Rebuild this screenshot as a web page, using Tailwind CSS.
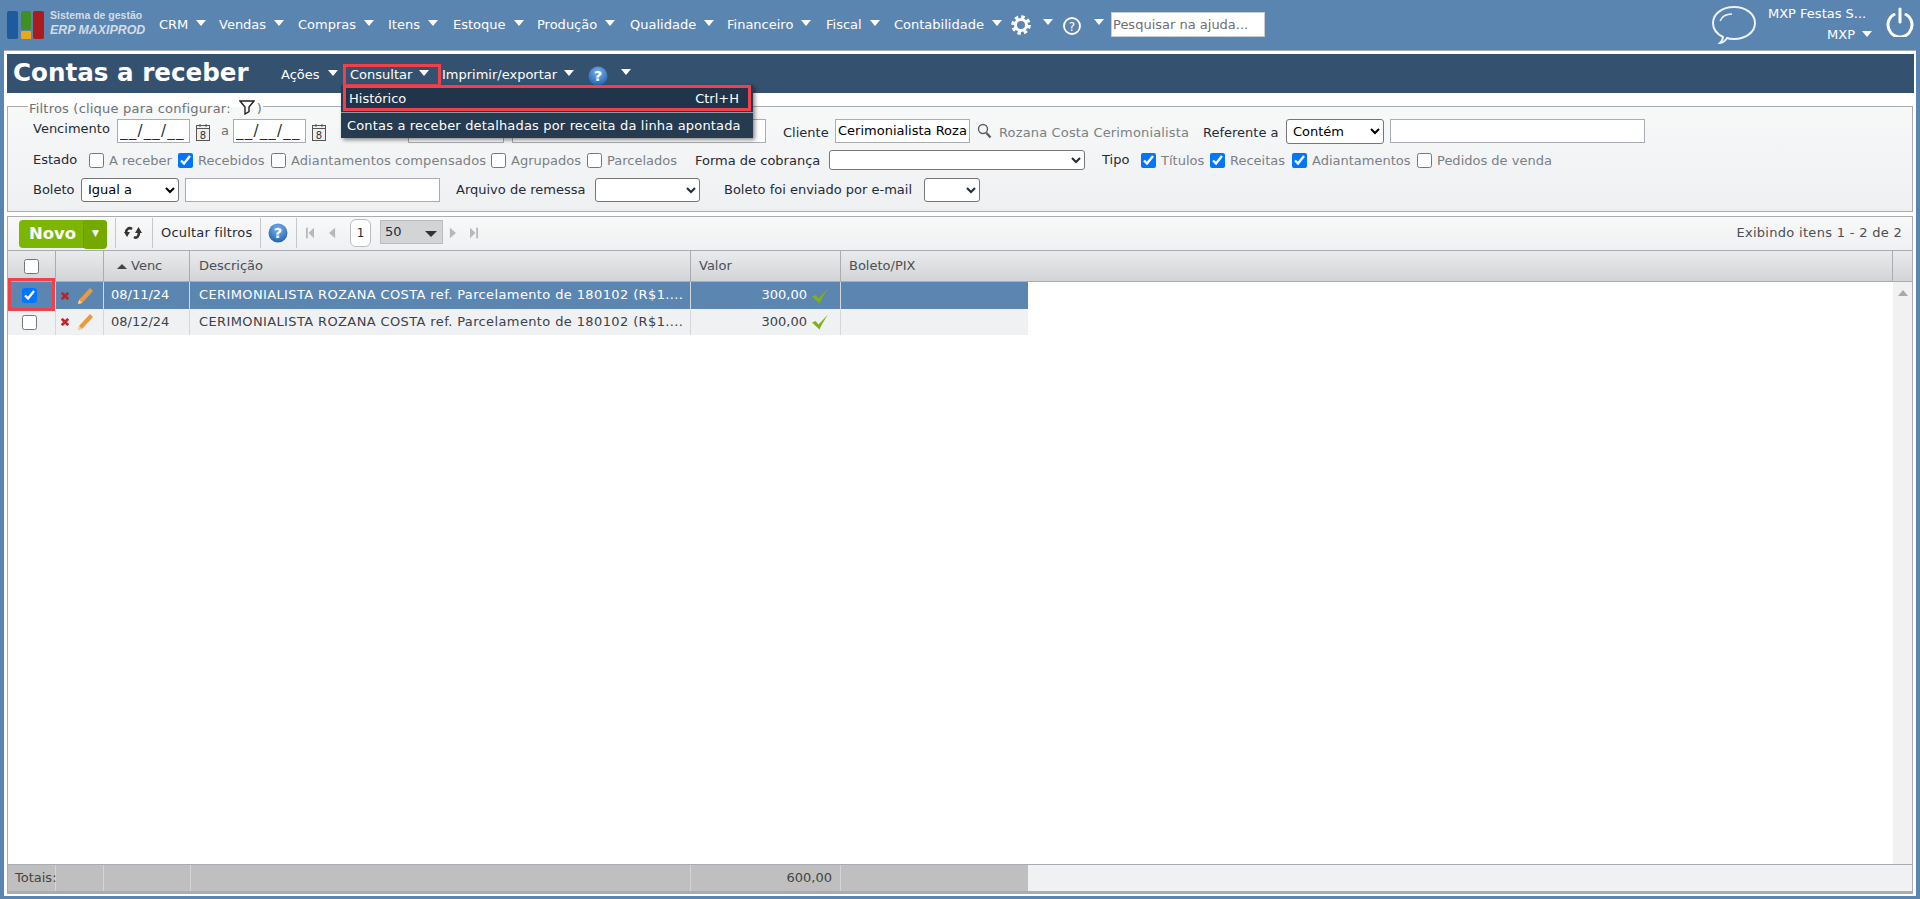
<!DOCTYPE html>
<html lang="pt-BR">
  <head>
    <meta charset="UTF-8" />
    <title>Contas a receber</title>
    <script src="https://cdn.jsdelivr.net/npm/@tailwindcss/browser@4"></script>
  </head>
  <body class="h-[899px] overflow-hidden bg-[#5b85b1] font-['DejaVu_Sans',sans-serif] text-[13px] text-[#1f2b36] flex flex-col">
    <!-- barra superior -->
    <header class="h-[50px] flex items-center text-white shrink-0">
      <svg class="ml-[7px] w-[37px] h-[28px]" viewBox="0 0 37 28">
        <rect x="0" y="0" width="11" height="28" rx="2" fill="#1d5a9e" />
        <rect x="14" y="0" width="10" height="19" rx="2" fill="#3f8f23" />
        <rect x="14" y="20" width="10" height="8" rx="1" fill="#e8a81c" />
        <rect x="26" y="0" width="11" height="28" rx="2" fill="#ab1a1c" />
      </svg>
      <div class="ml-[6px] w-[109px] font-['Liberation_Sans',sans-serif] font-bold text-[#d3dce6] -mt-[4px]">
        <div class="text-[10.5px] leading-[14px]">Sistema de gestão</div>
        <div class="text-[12.4px] leading-[16px] italic">ERP MAXIPROD</div>
      </div>
      <nav class="flex items-center">
        <a class="flex items-center w-[60px]">CRM<i class="ml-[8px] border-x-[5px] border-x-transparent border-t-[6px] border-t-white -mt-[4px]"></i></a>
        <a class="flex items-center w-[79px]">Vendas<i class="ml-[8px] border-x-[5px] border-x-transparent border-t-[6px] border-t-white -mt-[4px]"></i></a>
        <a class="flex items-center w-[90px]">Compras<i class="ml-[8px] border-x-[5px] border-x-transparent border-t-[6px] border-t-white -mt-[4px]"></i></a>
        <a class="flex items-center w-[65px]">Itens<i class="ml-[8px] border-x-[5px] border-x-transparent border-t-[6px] border-t-white -mt-[4px]"></i></a>
        <a class="flex items-center w-[84px]">Estoque<i class="ml-[8px] border-x-[5px] border-x-transparent border-t-[6px] border-t-white -mt-[4px]"></i></a>
        <a class="flex items-center w-[93px]">Produção<i class="ml-[8px] border-x-[5px] border-x-transparent border-t-[6px] border-t-white -mt-[4px]"></i></a>
        <a class="flex items-center w-[97px]">Qualidade<i class="ml-[8px] border-x-[5px] border-x-transparent border-t-[6px] border-t-white -mt-[4px]"></i></a>
        <a class="flex items-center w-[99px]">Financeiro<i class="ml-[8px] border-x-[5px] border-x-transparent border-t-[6px] border-t-white -mt-[4px]"></i></a>
        <a class="flex items-center w-[68px]">Fiscal<i class="ml-[8px] border-x-[5px] border-x-transparent border-t-[6px] border-t-white -mt-[4px]"></i></a>
        <a class="flex items-center w-[117px]">Contabilidade<i class="ml-[8px] border-x-[5px] border-x-transparent border-t-[6px] border-t-white -mt-[4px]"></i></a>
        <svg class="w-[20px] h-[20px]" viewBox="0 0 20 20" fill="none" stroke="white">
          <circle cx="10" cy="10" r="5.5" stroke-width="3" />
          <circle cx="10" cy="10" r="8" stroke-width="3.6" stroke-dasharray="3.4 2.88" />
        </svg>
        <i class="ml-[12px] border-x-[5px] border-x-transparent border-t-[6px] border-t-white -mt-[6px]"></i>
        <svg class="ml-[10px] w-[18px] h-[18px] mt-[2px]" viewBox="0 0 18 18">
          <circle cx="9" cy="9" r="8" fill="none" stroke="white" stroke-width="1.8" />
          <text x="9" y="13.5" text-anchor="middle" font-size="12" fill="white">?</text>
        </svg>
        <i class="ml-[13px] border-x-[5px] border-x-transparent border-t-[6px] border-t-white -mt-[6px]"></i>
        <input class="ml-[7px] w-[154px] h-[25px] bg-white border border-[#c7ccd2] px-[1px] -mt-[1px] placeholder:text-[#6f6f6f] text-[13px]" placeholder="Pesquisar na ajuda..." />
      </nav>
      <div class="ml-auto flex items-center">
        <svg class="w-[46px] h-[40px]" viewBox="0 0 46 40" fill="none" stroke="#eef2f6">
          <path d="M9 38c2-2 3-4 3-6C6 29 2 24 2 18 2 9 11 2 23 2s21 7 21 16-9 16-21 16c-3 0-5 0-7-1-2 3-4 5-7 5z" stroke-width="2" />
          <path d="M9 16c2-5 6-7 12-7" stroke-width="1.4" />
        </svg>
        <div class="ml-[11px] w-[104px] text-right text-[13px] text-white">
          <div class="leading-[20px] -mt-[2px] text-left">MXP Festas S...</div>
          <div class="leading-[20px] mt-[1px] flex items-center justify-end">MXP<i class="ml-[7px] border-x-[5px] border-x-transparent border-t-[6px] border-t-white -mt-[2px]"></i></div>
        </div>
        <svg class="ml-[14px] mr-[6px] w-[28px] h-[30px] -mt-[6px]" viewBox="0 0 28 30" fill="none" stroke="white" stroke-width="3" stroke-linecap="round">
          <path d="M8 7.5A12 12 0 1 0 20 7.5" />
          <path d="M14 2v13" />
        </svg>
      </div>
    </header>

    <main class="flex-1 min-h-0 ml-[4px] mr-[4px] mb-[3px] bg-white border-t border-[#a9adb3] pt-[3px] pl-[3px] pr-[2px] pb-[2px] flex flex-col">
      <!-- titulo e menu da pagina -->
      <div class="relative h-[39px] shrink-0 bg-[#355170] flex items-center text-white z-10">
        <h1 class="ml-[6px] w-[268px] text-[24.6px] font-bold leading-[39px] -mt-[2px]">Contas a receber</h1>
        <a class="flex items-center w-[62px] mt-[3px]">Ações<i class="ml-[8px] border-x-[5px] border-x-transparent border-t-[6px] border-t-white -mt-[5px]"></i></a>
        <a class="flex items-center w-[98px] h-[23px] mt-[3px] pl-[4px] border-[3px] border-[#f0404a]">Consultar<i class="ml-[7px] border-x-[5px] border-x-transparent border-t-[6px] border-t-white -mt-[5px]"></i></a>
        <a class="flex items-center w-[146px] ml-[1px] mt-[3px]">Imprimir/exportar<i class="ml-[7px] border-x-[5px] border-x-transparent border-t-[6px] border-t-white -mt-[5px]"></i></a>
        <svg class="w-[20px] h-[20px] mt-[5px]" viewBox="0 0 19 19">
          <defs>
            <radialGradient id="ball" cx="0.5" cy="0.3" r="0.75"><stop offset="0" stop-color="#7db2ea" /><stop offset="1" stop-color="#1b5fae" /></radialGradient>
          </defs>
          <circle cx="9.5" cy="9.5" r="9" fill="url(#ball)" />
          <text x="9.5" y="14.5" text-anchor="middle" font-size="14" font-weight="bold" fill="white">?</text>
        </svg>
        <i class="ml-[13px] border-x-[5px] border-x-transparent border-t-[6px] border-t-white -mt-[3px]"></i>

        <!-- menu Consultar aberto -->
        <div class="absolute left-[334px] top-[31px] w-[412px] h-[53px] bg-[#263a50] shadow-[2px_2px_4px_rgba(0,0,0,0.45)] text-white">
          <div class="mx-[2px] h-[26px] flex items-center justify-between pl-[3px] pr-[4px] pt-[1px] border-[3px] border-[#f0404a] bg-[#22344a]">
            <span>Histórico</span><span class="mr-[5px]">Ctrl+H</span>
          </div>
          <div class="mt-[1px] border-t border-[#8b98a8] h-[25px] flex items-center pl-[6px] pt-[1px] tracking-[0.17px]">Contas a receber detalhadas por receita da linha apontada</div>
        </div>
      </div>

      <!-- filtros -->
      <fieldset class="mt-[5px] mr-[1px] h-[114px] shrink-0 border border-[#a9adb3] bg-gradient-to-b from-[#f7f8f8] to-[#eff0f2]">
        <legend class="ml-[20px] px-[1px] h-[17px] flex items-center text-[#6d7276] pt-[5px] tracking-[0.2px]">
          Filtros (clique para configurar:
          <svg class="ml-[8px] w-[16px] h-[15px] -mt-[3px]" viewBox="0 0 16 15" fill="none" stroke="#222" stroke-width="1.4"><path d="M1 1h14L10 7v4.500l-4 2.500V7z" /></svg>
          <span class="ml-[2px]">)</span>
        </legend>
        <div class="pl-[25px] pt-[4px] flex flex-col">
          <div class="flex items-center h-[24px]">
            <span class="w-[84px] -mt-[5px]">Vencimento</span>
            <input class="w-[73px] h-[24px] bg-white border border-[#a9adb3] px-[2px] text-[15px] tracking-[1.2px]" value="__/__/__" />
            <svg class="ml-[5px] w-[16px] h-[19px] mt-[2px]" viewBox="0 0 16 19" fill="#eef0f0" stroke="#555"><rect x="1.5" y="2.5" width="13" height="15" /><path d="M1.5 5.5h13M5 1v3M11 1v3" /><text x="8" y="15.5" text-anchor="middle" font-size="10" fill="#333" stroke="none">8</text></svg>
            <span class="ml-[10px] w-[12px] text-[#6d7276]">a</span>
            <input class="w-[73px] h-[24px] bg-white border border-[#a9adb3] px-[2px] text-[15px] tracking-[1.2px]" value="__/__/__" />
            <svg class="ml-[5px] w-[16px] h-[19px] mt-[2px]" viewBox="0 0 16 19" fill="#eef0f0" stroke="#555"><rect x="1.5" y="2.5" width="13" height="15" /><path d="M1.5 5.5h13M5 1v3M11 1v3" /><text x="8" y="15.5" text-anchor="middle" font-size="10" fill="#333" stroke="none">8</text></svg>
            <input class="ml-[81px] w-[96px] h-[24px] bg-white border border-[#a9adb3]" />
            <input class="ml-[8px] w-[254px] h-[24px] bg-white border border-[#a9adb3]" />
            <span class="ml-[17px] w-[52px] mt-[3px]">Cliente</span>
            <input class="w-[135px] h-[24px] bg-white border border-[#a9adb3] px-[2px] pb-[2px] text-[13px] text-black" value="Cerimonialista Roza" />
            <svg class="ml-[7px] w-[15px] h-[16px]" viewBox="0 0 15 16" fill="none" stroke="#5a5f64"><circle cx="6" cy="6" r="4.5" stroke-width="1.4" /><path d="M9.500 10l4 4.500" stroke-width="2.4" /></svg>
            <span class="ml-[7px] w-[204px] mt-[3px] text-[#7b8085] tracking-[0.15px]">Rozana Costa Cerimonialista</span>
            <span class="w-[83px] mt-[3px]">Referente a</span>
            <select class="w-[98px] h-[25px] bg-white border border-[#767676] rounded-[3px] pl-[2px] text-[13px] text-black"><option>Contém</option></select>
            <input class="ml-[6px] w-[255px] h-[24px] bg-white border border-[#a9adb3]" />
          </div>
          <div class="flex items-center h-[20px] mt-[7px]">
            <span class="w-[56px]">Estado</span>
            <label class="w-[89px] mt-[1px] flex items-center gap-[5px] text-[#7b8085]"><input type="checkbox" class="w-[15px] h-[15px] accent-[#0075ff]" />A receber</label>
            <label class="w-[93px] mt-[1px] flex items-center gap-[5px] text-[#7b8085]"><input type="checkbox" checked class="w-[15px] h-[15px] accent-[#0075ff]" />Recebidos</label>
            <label class="w-[220px] mt-[1px] flex items-center gap-[5px] text-[#7b8085] tracking-[0.1px]"><input type="checkbox" class="w-[15px] h-[15px] accent-[#0075ff]" />Adiantamentos compensados</label>
            <label class="w-[96px] mt-[1px] flex items-center gap-[5px] text-[#7b8085]"><input type="checkbox" class="w-[15px] h-[15px] accent-[#0075ff]" />Agrupados</label>
            <label class="w-[108px] mt-[1px] flex items-center gap-[5px] text-[#7b8085]"><input type="checkbox" class="w-[15px] h-[15px] accent-[#0075ff]" />Parcelados</label>
            <span class="w-[134px] mt-[2px]">Forma de cobrança</span>
            <select class="w-[256px] h-[20px] bg-white border border-[#767676] rounded-[3px] text-[13px]"><option></option></select>
            <span class="ml-[17px] w-[39px]">Tipo</span>
            <label class="w-[69px] mt-[1px] flex items-center gap-[5px] text-[#7b8085]"><input type="checkbox" checked class="w-[15px] h-[15px] accent-[#0075ff]" />Títulos</label>
            <label class="w-[82px] mt-[1px] flex items-center gap-[5px] text-[#7b8085]"><input type="checkbox" checked class="w-[15px] h-[15px] accent-[#0075ff]" />Receitas</label>
            <label class="w-[125px] mt-[1px] flex items-center gap-[5px] text-[#7b8085]"><input type="checkbox" checked class="w-[15px] h-[15px] accent-[#0075ff]" />Adiantamentos</label>
            <label class="mt-[1px] flex items-center gap-[5px] text-[#7b8085]"><input type="checkbox" class="w-[15px] h-[15px] accent-[#0075ff]" />Pedidos de venda</label>
          </div>
          <div class="flex items-center h-[25px] mt-[7px]">
            <span class="w-[48px]">Boleto</span>
            <select class="w-[98px] h-[24px] bg-white border border-[#767676] rounded-[3px] pl-[2px] text-[13px] text-black"><option>Igual a</option></select>
            <input class="ml-[6px] w-[255px] h-[24px] bg-white border border-[#a9adb3]" />
            <span class="ml-[16px] w-[139px]">Arquivo de remessa</span>
            <select class="w-[105px] h-[24px] bg-white border border-[#767676] rounded-[3px] text-[13px]"><option></option></select>
            <span class="ml-[24px] w-[200px]">Boleto foi enviado por e-mail</span>
            <select class="w-[56px] h-[24px] bg-white border border-[#767676] rounded-[3px] text-[13px]"><option></option></select>
          </div>
        </div>
      </fieldset>

      <!-- barra de ferramentas -->
      <div class="mt-[4px] mr-[1px] h-[34px] shrink-0 flex items-center pb-[2px] border-x border-t border-[#a9adb3] bg-gradient-to-b from-[#f9f9f9] to-[#eff0f2]">
        <div class="ml-[11px] flex h-[28px] mt-[2px] rounded-[4px] bg-[#7cb600] text-white font-bold">
          <span class="w-[64px] pl-[3px] text-center text-[16.5px] leading-[28px]">Novo</span>
          <span class="w-[24px] h-[29px] rounded-[4px] bg-[#74aa00] border-l border-[#6c9e00] flex items-center justify-center text-[9px]">▼</span>
        </div>
        <span class="ml-[8px] h-[30px] border-l border-[#c3c6ca]"></span>
        <svg class="ml-[8px] w-[18px] h-[16px]" viewBox="0 0 18 16" fill="none" stroke="#333" stroke-width="2.6"><path d="M8 4C5 2 2 4 2 8" /><path d="M0 7h6l-3 5z" fill="#333" stroke="none" /><path d="M10 12c3 2 5-1 5-5" /><path d="M11 8h7l-3.500-6z" fill="#333" stroke="none" /></svg>
        <span class="ml-[10px] h-[30px] border-l border-[#c3c6ca]"></span>
        <span class="ml-[8px] w-[99px] tracking-[0.2px]">Ocultar filtros</span>
        <span class="h-[30px] border-l border-[#c3c6ca]"></span>
        <svg class="ml-[7px] w-[20px] h-[20px]" viewBox="0 0 19 19">
          <circle cx="9.5" cy="9.5" r="9" fill="url(#ball)" />
          <text x="9.5" y="14.5" text-anchor="middle" font-size="14" font-weight="bold" fill="white">?</text>
        </svg>
        <span class="ml-[8px] h-[30px] border-l border-[#c3c6ca]"></span>
        <svg class="ml-[9px] w-[8px] h-[12px]" viewBox="0 0 9 12" fill="#b5b8bc"><rect width="2" height="12" /><path d="M9 0v12L3 6z" /></svg>
        <svg class="ml-[15px] w-[7px] h-[12px]" viewBox="0 0 8 12" fill="#b5b8bc"><path d="M7 0v12L0 6z" /></svg>
        <span class="ml-[14px] w-[21px] h-[28px] rounded-[6px] border border-[#b9bcc0] bg-white flex items-center justify-center text-[12px]">1</span>
        <div class="ml-[9px] w-[63px] h-[24px] -mt-[1px] bg-[#d3d4d6] border border-[#b9bcc0] flex items-center pl-[4px] text-[13px]">50<i class="ml-auto mr-[5px] mt-[3px] border-x-[6px] border-x-transparent border-t-[6px] border-t-[#333]"></i></div>
        <svg class="ml-[6px] w-[7px] h-[12px]" viewBox="0 0 8 12" fill="#b5b8bc"><path d="M1 0v12l7-6z" /></svg>
        <svg class="ml-[14px] w-[8px] h-[12px]" viewBox="0 0 9 12" fill="#b5b8bc"><path d="M0 0v12l6-6z" /><rect x="7" width="2" height="12" /></svg>
        <span class="ml-auto mr-[10px] text-[#4a4f55] tracking-[0.3px]">Exibindo itens 1 - 2 de 2</span>
      </div>

      <!-- grade -->
      <div class="flex-1 min-h-0 mr-[1px] border-x border-[#a9adb3] flex flex-col text-[13px]">
        <div class="h-[32px] shrink-0 flex border-y border-[#a9adb3] bg-gradient-to-b from-[#eaebec] to-[#d2d4d7] text-[#4a4f55]">
          <div class="w-[48px] flex items-center justify-center border-r border-[#a9adb3]"><input type="checkbox" class="w-[15px] h-[15px]" /></div>
          <div class="w-[48px] border-r border-[#a9adb3]"></div>
          <div class="w-[86px] flex items-center pl-[13px] border-r border-[#a9adb3]"><i class="mr-[4px] border-x-[5px] border-x-transparent border-b-[5px] border-b-[#444]"></i>Venc</div>
          <div class="w-[501px] flex items-center pl-[9px] border-r border-[#a9adb3]">Descrição</div>
          <div class="w-[150px] flex items-center pl-[8px] border-r border-[#a9adb3]">Valor</div>
          <div class="w-[1052px] flex items-center pl-[8px] border-r border-[#a9adb3]">Boleto/PIX</div>
        </div>
        <div class="flex-1 min-h-0 flex">
          <div class="w-[1885px]">
            <div class="flex h-[27px] w-[1020px] bg-[#5c86b2] text-white">
              <div class="relative w-[48px] flex items-center border-r border-[#d5d8db]">
                <input type="checkbox" checked class="ml-[14px] w-[15px] h-[15px] accent-[#0075ff]" />
                <span class="absolute left-0 -top-[4px] w-[47px] h-[33px] border-[3px] border-[#f0404a]"></span>
              </div>
              <div class="w-[48px] flex items-center border-r border-[#d5d8db]">
                <svg class="ml-[5px] w-[8px] h-[8px]" viewBox="0 0 10 10" stroke="#b8262c" stroke-width="3.4"><path d="M1 1l8 8M9 1l-8 8" /></svg>
                <svg class="ml-[8px] w-[17px] h-[18px]" viewBox="0 0 17 18"><path d="M1 17l1-4L13 1l3 3L5 16z" fill="#ec9a3c" /><path d="M1 17l1-4 3 3z" fill="#f4d9a8" /></svg>
              </div>
              <div class="w-[86px] flex items-center pl-[7px] pb-[2px] border-r border-[#d5d8db]">08/11/24</div>
              <div class="w-[501px] flex items-center pl-[9px] pb-[2px] border-r border-[#d5d8db] whitespace-nowrap overflow-hidden tracking-[0.38px]">CERIMONIALISTA ROZANA COSTA ref. Parcelamento de 180102 (R$1....</div>
              <div class="w-[150px] flex items-center justify-end pr-[11px] border-r border-[#d5d8db]"><span class="pb-[2px]">300,00</span><svg class="ml-[5px] w-[17px] h-[16px]" viewBox="0 0 17 15"><path d="M0 8l3.500-1.500 3 3.500L16 0c-3 5-6 9-8.500 15z" fill="#82b01a" /></svg></div>
            </div>
            <div class="flex h-[26px] w-[1020px] bg-[#f0f1f3] text-[#3d4248]">
              <div class="w-[48px] flex items-center border-r border-[#d5d8db]">
                <input type="checkbox" class="ml-[14px] w-[15px] h-[15px]" />
              </div>
              <div class="w-[48px] flex items-center border-r border-[#d5d8db]">
                <svg class="ml-[5px] w-[8px] h-[8px]" viewBox="0 0 10 10" stroke="#c2272d" stroke-width="3.4"><path d="M1 1l8 8M9 1l-8 8" /></svg>
                <svg class="ml-[8px] w-[17px] h-[18px]" viewBox="0 0 17 18"><path d="M1 17l1-4L13 1l3 3L5 16z" fill="#ec9a3c" /><path d="M1 17l1-4 3 3z" fill="#f4d9a8" /></svg>
              </div>
              <div class="w-[86px] flex items-center pl-[7px] border-r border-[#d5d8db]">08/12/24</div>
              <div class="w-[501px] flex items-center pl-[9px] border-r border-[#d5d8db] whitespace-nowrap overflow-hidden tracking-[0.38px]">CERIMONIALISTA ROZANA COSTA ref. Parcelamento de 180102 (R$1....</div>
              <div class="w-[150px] flex items-center justify-end pr-[11px] border-r border-[#d5d8db]">300,00<svg class="ml-[5px] w-[17px] h-[16px]" viewBox="0 0 17 15"><path d="M0 8l3.500-1.500 3 3.500L16 0c-3 5-6 9-8.500 15z" fill="#82b01a" /></svg></div>
            </div>
          </div>
          <div class="flex-1 bg-[#f1f1f1] flex justify-center pt-[8px]"><i class="border-x-[5px] border-x-transparent border-b-[6px] border-b-[#a9a9a9] h-0"></i></div>
        </div>
        <!-- totais -->
        <div class="h-[30px] shrink-0 flex border-t border-[#a9adb3] border-b-[3px] border-b-[#a9adb3] bg-[#f0f1f3] text-[#444]">
          <div class="w-[48px] bg-[#bfbfbf] border-r border-[#d5d5d5] flex items-center pl-[7px]">Totais:</div>
          <div class="w-[48px] bg-[#bfbfbf] border-r border-[#d5d5d5]"></div>
          <div class="w-[87px] bg-[#bfbfbf] border-r border-[#d5d5d5]"></div>
          <div class="w-[500px] bg-[#bfbfbf] border-r border-[#d5d5d5]"></div>
          <div class="w-[150px] bg-[#bfbfbf] border-r border-[#d5d5d5] flex items-center justify-end pr-[8px]">600,00</div>
          <div class="w-[187px] bg-[#bfbfbf]"></div>
        </div>
      </div>
    </main>
  </body>
</html>
